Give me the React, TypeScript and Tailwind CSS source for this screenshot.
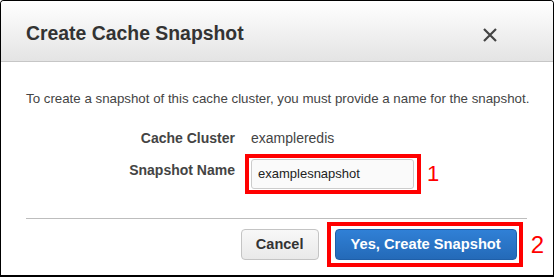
import React from "react";

export default function App() {
  const font = { fontFamily: '"Liberation Sans", Arial, sans-serif' };
  return (
    <div
      className="w-[554px] h-[277px] bg-white border border-black border-b-2 rounded-t-[4px] overflow-hidden flex flex-col"
      style={font}
    >
      <div className="h-[61px] shrink-0 flex items-center justify-between pl-[25px] pr-[56px] pt-[6px] border-b border-[#c6c6c6] bg-gradient-to-b from-[#ffffff] to-[#e4e4e4]">
        <div className="text-[19.4px] font-bold text-[#333333]">Create Cache Snapshot</div>
        <svg width="14" height="14" viewBox="0 0 14 14" className="mt-[1px]">
          <path d="M1 1 L13 13 M13 1 L1 13" stroke="#444" strokeWidth="2.2" />
        </svg>
      </div>
      <div className="pl-[25px] pr-[26px] pt-[28px]">
        <p className="text-[13.3px] leading-[18px] text-[#444444] whitespace-nowrap">
          To create a snapshot of this cache cluster, you must provide a name for the snapshot.
        </p>
        <div className="mt-[20px] grid grid-cols-[209px_1fr] gap-x-[16px] gap-y-[11px] text-[14px] leading-[20px]">
          <div className="text-right font-bold text-[#444444]">Cache Cluster</div>
          <div className="text-[#444444]">exampleredis</div>
          <div className="text-right font-bold text-[#444444] pt-[1px]">Snapshot Name</div>
          <div className="flex items-center">
            <div className="relative">
              <div className="w-[163px] h-[30px] rounded-[3px] border border-[#cccccc] bg-[#fafafa] px-[6px] flex items-center text-[13px] text-[#222222]">
                examplesnapshot
              </div>
              <div className="absolute -left-[6px] -right-[7px] -top-[5px] -bottom-[5px] border-[4px] border-[#ff0000]" />
            </div>
            <span className="ml-[13px] text-[22px] leading-[22px] text-[#ff0000]">1</span>
          </div>
        </div>
        <div className="mt-[29px] h-px bg-[#bdbdbd]" />
      </div>
      <div className="flex items-center justify-end pt-[10px] pr-[9px]">
        <button className="w-[78px] h-[31px] rounded-[4px] border border-[#c4c4c4] bg-gradient-to-b from-[#f8f8f8] to-[#e9e9e9] text-[14.5px] font-bold text-[#333333]">
          Cancel
        </button>
        <div className="relative ml-[16px]">
          <button className="w-[182px] h-[31px] rounded-[4px] border border-[#1f5fa9] bg-gradient-to-b from-[#3080d6] to-[#246ab8] text-[14.7px] font-bold text-white">
            Yes, Create Snapshot
          </button>
          <div className="absolute -left-[8px] -right-[6px] -top-[7px] -bottom-[7px] border-[4px] border-[#ff0000]" />
        </div>
        <span className="ml-[14px] text-[24px] leading-[24px] text-[#ff0000]">2</span>
      </div>
    </div>
  );
}
